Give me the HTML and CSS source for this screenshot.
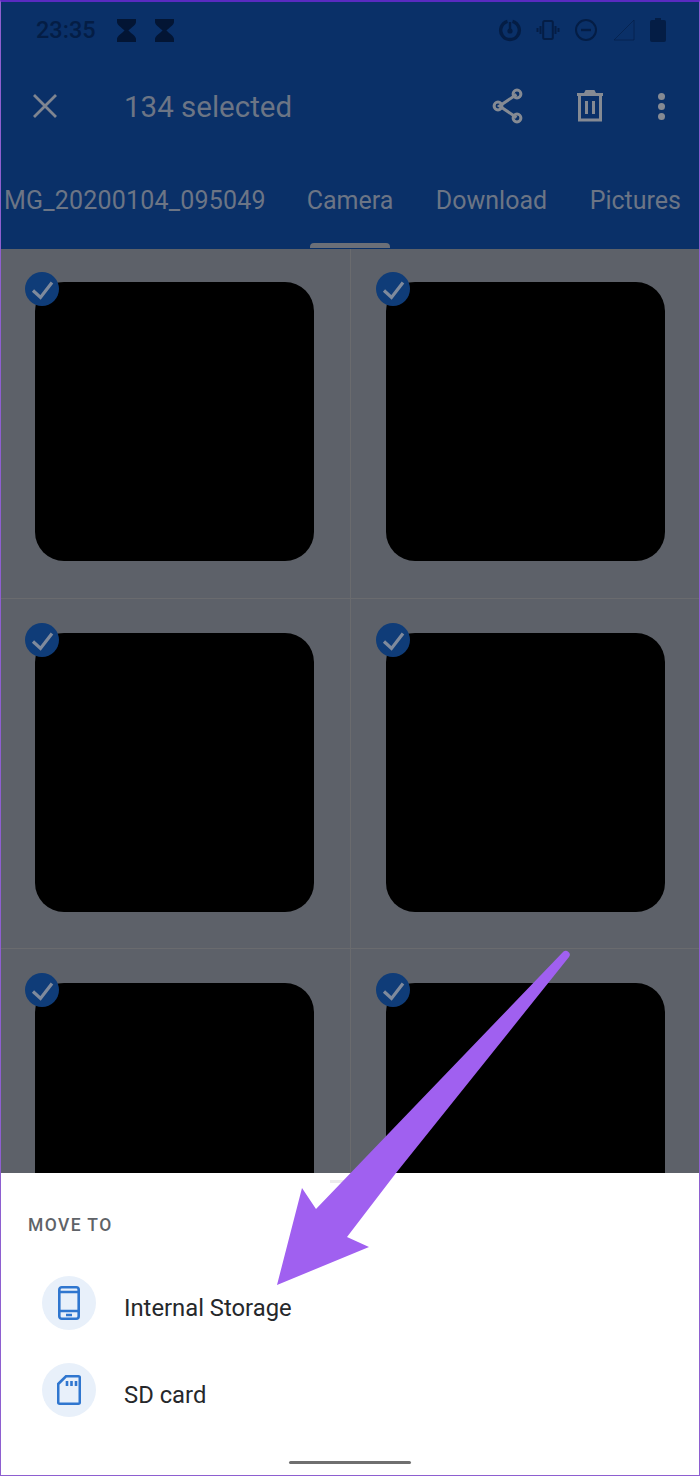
FILE: index.html
```html
<!DOCTYPE html>
<html lang="en">
<head>
    <meta charset="UTF-8">
    <title>Move to</title>
    <link rel="stylesheet" href="styles.css">
</head>
<body>
    <div class="screen">
        <header class="appbar">
            <div class="status">
                <div class="status-left">
                    <span class="clock">23:35</span>
                    <svg class="hourglass" viewBox="0 0 20 24"><path d="M0 0h20v3c0 3-5 6-8 9 3 3 8 6 8 9v3H0v-3c0-3 5-6 8-9-3-3-8-6-8-9z"/></svg>
                    <svg class="hourglass" viewBox="0 0 20 24"><path d="M0 0h20v3c0 3-5 6-8 9 3 3 8 6 8 9v3H0v-3c0-3 5-6 8-9-3-3-8-6-8-9z"/></svg>
                </div>
                <div class="status-right">
                    <svg class="st-icon" viewBox="0 0 24 24"><path d="M14.500 3.300A9.300 9.300 0 1 1 9.500 3.300" fill="none" stroke-width="3.400"/><path d="M12 4v8.500" fill="none" stroke-width="2.400"/><circle cx="12" cy="13" r="2.600" stroke="none"/></svg>
                    <svg class="st-icon" viewBox="0 0 24 24"><rect x="7.200" y="3" width="9.600" height="18" rx="1.500" fill="none" stroke-width="2"/><path d="M4.500 8v8M1.500 10v4M19.500 8v8M22.500 10v4" fill="none" stroke-width="2"/></svg>
                    <svg class="st-icon" viewBox="0 0 24 24"><circle cx="12" cy="12" r="10" fill="none" stroke-width="2"/><path d="M7 12h10" fill="none" stroke-width="2.400"/></svg>
                    <svg class="st-icon" viewBox="0 0 24 24"><path d="M2 22L22 2v20z" fill="none" stroke-width="1" opacity=".6"/></svg>
                    <svg class="st-icon battery" viewBox="0 0 16 24"><path d="M5 0h6v2h3a2 2 0 0 1 2 2v18a2 2 0 0 1-2 2H2a2 2 0 0 1-2-2V4a2 2 0 0 1 2-2h3z" stroke="none"/></svg>
                </div>
            </div>
            <div class="toolbar">
                <svg class="close" viewBox="0 0 24 24"><path d="M1 1l22 22M23 1L1 23"/></svg>
                <span class="count">134 selected</span>
                <svg class="share" viewBox="0 0 32 36"><path d="M24.500 6.500L7.500 18l17 11.500"/><circle cx="25" cy="6" r="3.900"/><circle cx="6" cy="18" r="3.900"/><circle cx="25" cy="30" r="3.900"/></svg>
                <svg class="trash" viewBox="0 0 28 32"><path d="M1 4.500h26M9 4.500L10.500 1.500h7L19 4.500M3.500 5v25h21V5M10.500 11v13M17.500 11v13"/></svg>
                <div class="more"><i></i><i></i><i></i></div>
            </div>
            <nav class="tabs">
                <span class="tab tab-first">MG_20200104_095049</span>
                <span class="tab tab-active">Camera</span>
                <span class="tab">Download</span>
                <span class="tab">Pictures</span>
            </nav>
        </header>

        <div class="grid">
            <div class="cell"><div class="tile"><svg class="check" viewBox="0 0 34 34"><path d="M8 18.500l7.500 7L27 10.500"/></svg></div></div>
            <div class="cell"><div class="tile"><svg class="check" viewBox="0 0 34 34"><path d="M8 18.500l7.500 7L27 10.500"/></svg></div></div>
            <div class="cell"><div class="tile"><svg class="check" viewBox="0 0 34 34"><path d="M8 18.500l7.500 7L27 10.500"/></svg></div></div>
            <div class="cell"><div class="tile"><svg class="check" viewBox="0 0 34 34"><path d="M8 18.500l7.500 7L27 10.500"/></svg></div></div>
            <div class="cell"><div class="tile"><svg class="check" viewBox="0 0 34 34"><path d="M8 18.500l7.500 7L27 10.500"/></svg></div></div>
            <div class="cell"><div class="tile"><svg class="check" viewBox="0 0 34 34"><path d="M8 18.500l7.500 7L27 10.500"/></svg></div></div>
        </div>

        <section class="sheet">
            <div class="handle"></div>
            <h2 class="sheet-title">MOVE TO</h2>
            <div class="option">
                <div class="option-icon">
                    <svg class="phone-icon" viewBox="0 0 22 34"><rect x="1.300" y="1.300" width="19.400" height="31.400" rx="2.500"/><path d="M1.500 6h19M1.500 25h19M8 29h6"/></svg>
                </div>
                <span class="option-label">Internal Storage</span>
            </div>
            <div class="option">
                <div class="option-icon">
                    <svg class="sd-icon" viewBox="0 0 24 30"><path d="M9 1.300h12.500a1.300 1.300 0 0 1 1.300 1.300v24.800a1.300 1.300 0 0 1-1.300 1.300H2.500a1.300 1.300 0 0 1-1.300-1.300V9z"/><path d="M10 6v5M14.500 6v5M19 6v5"/></svg>
                </div>
                <span class="option-label">SD card</span>
            </div>
            <div class="home-bar"></div>
        </section>

        <svg class="arrow" viewBox="0 0 700 1476"><path d="M563.500 951.500Q566 950 568.500 952T569 957L396 1173 347 1237 369 1247 277 1285 302 1188 316 1209z"/></svg>
        <div class="frame"></div>
    </div>
</body>
</html>
```

FILE: styles.css
```css
* {
    margin: 0;
    padding: 0;
    box-sizing: border-box;
}

body {
    background-color: #fff;
    font-family: Roboto, "Liberation Sans", sans-serif;
}

.screen {
    position: relative;
    width: 700px;
    height: 1476px;
    overflow: hidden;
    display: flex;
    flex-direction: column;
    background-color: #5d6169;
}

/* top bar */
.appbar {
    height: 249px;
    flex: none;
    background-color: #0a3068;
    position: relative;
}

.status {
    height: 60px;
    display: flex;
    justify-content: space-between;
    align-items: center;
    padding: 0 34px 0 36px;
}

.status-left {
    display: flex;
    align-items: center;
}

.clock {
    font-size: 23.500px;
    color: #041d45;
    font-weight: 500;
    margin-right: 21px;
}

.hourglass {
    width: 19px;
    height: 23px;
    fill: #031534;
    margin-right: 19px;
}

.status-right {
    display: flex;
    align-items: center;
    gap: 14px;
}

.st-icon {
    width: 24px;
    height: 24px;
    fill: #041d45;
    stroke: #041d45;
}

.battery {
    width: 16px;
}

.toolbar {
    height: 92px;
    display: flex;
    align-items: center;
    padding-left: 33px;
}

.close {
    width: 24px;
    height: 24px;
    fill: none;
    stroke: #7f8590;
    stroke-width: 2.800;
    margin-right: 67px;
}

.count {
    font-size: 29.500px;
    color: #6c7585;
    margin-top: 2px;
}

.share {
    width: 32px;
    height: 36px;
    fill: none;
    stroke: #858a93;
    stroke-width: 3;
    margin-left: auto;
}

.trash {
    width: 28px;
    height: 32px;
    fill: none;
    stroke: #858a93;
    stroke-width: 3;
    margin-left: 52px;
}

.more {
    display: flex;
    flex-direction: column;
    gap: 3px;
    margin: 0 35px 0 54px;
}

.more i {
    display: block;
    width: 7px;
    height: 7px;
    border-radius: 50%;
    background-color: #858a93;
}

.tabs {
    display: flex;
    align-items: center;
    height: 97px;
    padding-left: 4px;
    gap: 42.500px;
    white-space: nowrap;
}

.tab {
    font-size: 25px;
    color: #6c7585;
}

.tab-first {
    letter-spacing: 0.200px;
    margin-right: -1.500px;
}

.tab-active {
    position: relative;
}

.tab-active::after {
    content: "";
    position: absolute;
    left: 3px;
    right: 3px;
    top: 57px;
    height: 5px;
    background-color: #6b6f78;
    border-radius: 4px 4px 0 0;
}

/* photos */
.grid {
    display: grid;
    grid-template-columns: 350px 350px;
    grid-auto-rows: 350px;
    background-color: #5d6169;
}

.cell {
    padding: 34px 35px 0 35px;
    border-bottom: 1px solid #6a6b6e;
}

.cell:nth-child(-n+2) {
    padding-top: 33px;
}

.cell:nth-child(even) {
    border-left: 1px solid #6a6b6e;
}

.tile {
    position: relative;
    width: 279px;
    height: 279px;
    background-color: #000;
    border-radius: 29px;
}

.check {
    position: absolute;
    left: -10px;
    top: -10px;
    width: 34px;
    height: 34px;
    border-radius: 50%;
    background-color: #0f3c78;
    fill: none;
    stroke: #7f8a9c;
    stroke-width: 3.200;
}

/* bottom sheet */
.sheet {
    position: absolute;
    left: 0;
    right: 0;
    top: 1173px;
    bottom: 0;
    background-color: #fff;
    padding: 42px 0 0 28px;
}

.handle {
    position: absolute;
    left: 330px;
    top: 7px;
    width: 40px;
    height: 3px;
    background-color: #ececec;
}

.sheet-title {
    font-size: 17.500px;
    font-weight: 500;
    letter-spacing: 1.400px;
    color: #5f6368;
    line-height: 20px;
    margin-bottom: 24px;
}

.option {
    display: flex;
    align-items: center;
    height: 87px;
    padding-left: 14px;
}

.option-icon {
    width: 54px;
    height: 54px;
    border-radius: 50%;
    background-color: #e8f0fa;
    display: flex;
    align-items: center;
    justify-content: center;
    margin-right: 28px;
}

.option-icon svg {
    fill: none;
    stroke: #2f76cf;
    stroke-width: 2.600;
}

.phone-icon {
    width: 22px;
    height: 34px;
}

.sd-icon {
    width: 24px;
    height: 30px;
}

.option-label {
    font-size: 23.800px;
    color: #26282b;
    position: relative;
    top: 5px;
}

.home-bar {
    position: absolute;
    left: 289px;
    top: 288px;
    width: 122px;
    height: 3px;
    border-radius: 2px;
    background-color: #6f6f6f;
}

/* annotation over the screenshot */
.arrow {
    position: absolute;
    left: 0;
    top: 0;
    width: 700px;
    height: 1476px;
    fill: #a060f0;
}

.frame {
    position: absolute;
    inset: 0;
    border: 1px solid #8e5fd0;
    border-top: 2px solid #5a2bc0;
}
```
